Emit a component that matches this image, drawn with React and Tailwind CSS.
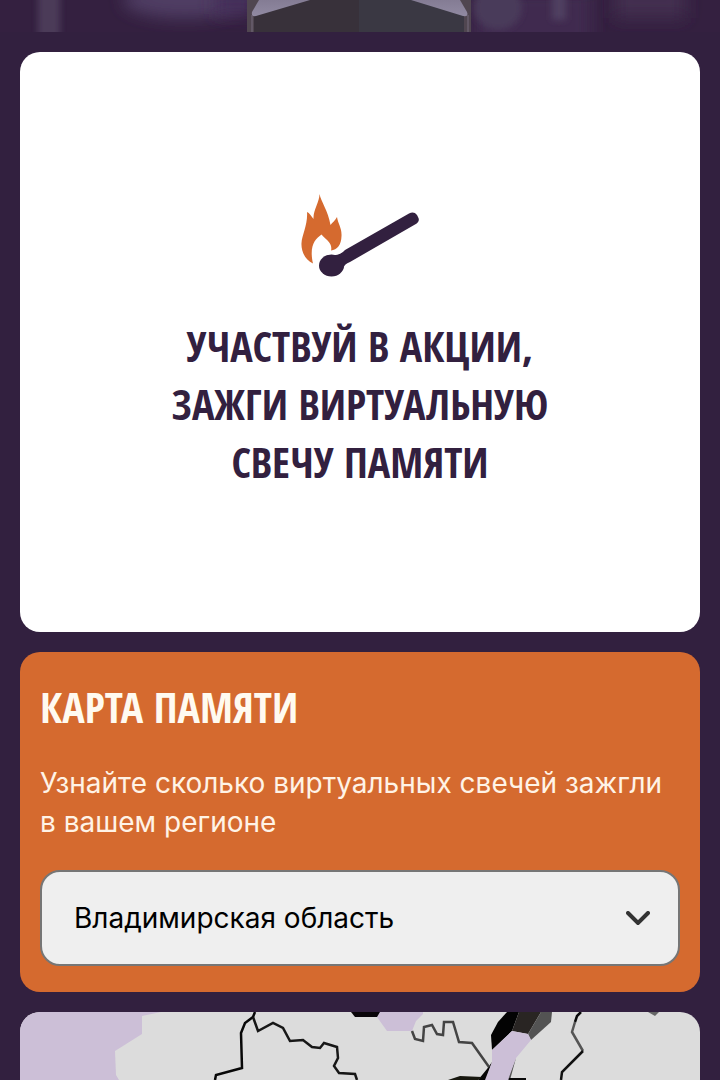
const regions = ["Владимирская область", "Московская область", "Рязанская область", "Ярославская область"];

function HeroPhoto() {
  return (
    <svg viewBox="0 0 720 32" className="block w-full" aria-hidden="true">
      <defs>
        <filter id="soft" x="-50%" y="-50%" width="200%" height="200%">
          <feGaussianBlur stdDeviation="8" />
        </filter>
        <filter id="slight" x="-50%" y="-50%" width="200%" height="200%">
          <feGaussianBlur stdDeviation="3" />
        </filter>
        <linearGradient id="ledge" x1="0" y1="0" x2="0" y2="1">
          <stop offset="0" stopColor="#847c94" />
          <stop offset="1" stopColor="#918aa2" />
        </linearGradient>
      </defs>
      <rect width="720" height="32" fill="#342040" />
      <rect x="38" y="-20" width="22" height="70" fill="#4b3a58" filter="url(#slight)" />
      <ellipse cx="185" cy="0" rx="62" ry="18" fill="#503c64" filter="url(#soft)" />
      <rect x="215" y="-20" width="40" height="34" fill="#452f5a" filter="url(#soft)" />
      <rect x="472" y="-10" width="120" height="60" fill="#3f2b50" filter="url(#soft)" />
      <ellipse cx="498" cy="8" rx="24" ry="22" fill="#4a3a5a" filter="url(#slight)" />
      <rect x="552" y="-20" width="14" height="40" fill="#4f3f60" filter="url(#slight)" />
      <rect x="615" y="-20" width="70" height="38" fill="#422f50" filter="url(#soft)" />
      <path d="M247 0H471V32H247Z" fill="#504650" />
      <path d="M254 14L300 0H359V32H254Z" fill="#38313a" />
      <path d="M359 0H420L464 14V32H359Z" fill="#3a3843" />
      <path d="M252 15V32M468 15V32" stroke="#625866" strokeWidth="2" />
      <path d="M259 0L252 12Q251 17 256 16L310 0Z" fill="url(#ledge)" />
      <path d="M460 0L467 12Q469 17 463 16L411 0Z" fill="url(#ledge)" />
    </svg>
  );
}

function MatchIcon() {
  return (
    <svg viewBox="0 0 120 84" className="h-[84px] w-[120px]" aria-hidden="true">
      <path
        d="M19.500 1C21 9 28 17 30.500 32C32 30 35.500 27 37 24C38 31 42 35 41.500 43C41.300 52 37 57 31 57.500C33 50 25 46 21.500 41.500C15 46 9 53 13 70.500C5 67 1 58 1.500 50C2 42 8 31 7 19C9.500 20 11 23 13.500 26C13 17 19.500 9 19.500 1Z"
        fill="#d56a2f"
      />
      <path d="M32 62Q40 63 45 57L109 20.500Q114 18 117 22L118.500 25Q120 29 115 31.500L50 69Q44 71 43 76Z" fill="#32203f" />
      <ellipse cx="31.500" cy="72.500" rx="12.500" ry="11" fill="#32203f" />
    </svg>
  );
}

function RegionMap() {
  return (
    <svg viewBox="0 0 680 68" className="block w-full" role="img" aria-label="Карта регионов">
      <rect width="680" height="68" fill="#dcdcdc" />
      <g fill="#ccbfd7">
        <path d="M0 0H141L122 4V22L95 39L96 63L99 68H0Z" />
        <path d="M359 0L357 5L367 19H392L396 9L403 2V0Z" />
      </g>
      <path d="M331 0L335 5H357L360 0Z" fill="#090509" />
      <path d="M487 0H499L492 19L472 38L471 23L478 10Z" fill="#030303" />
      <path d="M499 0H521L508 22L492 19Z" fill="#292523" />
      <path d="M521 0H532L531 10L511 28L508 22Z" fill="#535353" />
      <path d="M467 57L458 68H466L472 50Z" fill="#050505" />
      <path d="M496 46L490 68H487Z" fill="#555" />
      <path d="M489 66H506V68H489Z" fill="#080808" />
      <path d="M492 19L508 22L511 28L496 46L488 68H465L472 50V38Z" fill="#ccbfd7" />
      <path d="M628 0L635 4L639 0Z" fill="#666" />
      <path d="M428 68L440 64L462 65L458 68Z" fill="#17170f" />
      <g fill="none" strokeWidth="2.500">
        <path d="M235 0L233 5L225 11L221 21L222 56L196 63L195 68" stroke="#080808" />
        <path d="M233 5L238 19L253 11L263 16L270 29L283 28L292 35L300 36L304 31L317 35L318 46L314 54L319 61L335 62L337 68" stroke="#171717" />
        <path d="M392 19L395 27L403 29L404 15L412 13L417 22L423 23L424 10L433 10L439 30L452 31L469 55" stroke="#444" />
        <path d="M561 0L557 4L555 10" stroke="#080808" />
        <path d="M555 10L552 20L563 39" stroke="#555" />
        <path d="M563 39L542 60L541 68" stroke="#111" />
      </g>
    </svg>
  );
}

const heading =
  "font-['Open_Sans_Condensed','Roboto_Condensed',sans-serif] text-[42px] leading-[58px] font-semibold uppercase";

export default function App() {
  return (
    <main className="bg-[#32203f] font-['Inter',sans-serif]">
      <HeroPhoto />
      <div className="flex flex-col gap-5 px-5 pt-5">
        <a
          href="#candle"
          className="flex min-h-[580px] flex-col items-center justify-center gap-10 rounded-[20px] bg-white px-5 text-[#32203f]"
        >
          <MatchIcon />
          <h2 className={`${heading} text-center`}>
            Участвуй в акции,
            <br />
            зажги виртуальную
            <br />
            свечу памяти
          </h2>
        </a>

        <section className="rounded-[20px] bg-[#d56a2f] px-5 pt-[26px] pb-[26px] text-[#fff3e6]">
          <h2 className={`${heading} text-[#fffaf0]`}>Карта памяти</h2>
          <label htmlFor="region" className="mt-7 block text-[28px] leading-[39px]">
            Узнайте сколько виртуальных свечей зажгли
            <br />в вашем регионе
          </label>
          <div className="relative mt-7">
            <select
              id="region"
              defaultValue={regions[0]}
              className="block h-24 w-full appearance-none rounded-[20px] border-2 border-[#767676] bg-[#efefef] pr-20 pl-8 text-[28px] text-black"
            >
              {regions.map((r) => (
                <option key={r}>{r}</option>
              ))}
            </select>
            <svg
              viewBox="0 0 24 14"
              className="pointer-events-none absolute inset-y-0 right-[30px] my-auto h-[14px] w-6"
              fill="none"
              stroke="#333"
              strokeWidth="4"
              strokeLinecap="round"
              aria-hidden="true"
            >
              <path d="M2 2L12 12L22 2" />
            </svg>
          </div>
        </section>

        <section className="overflow-hidden rounded-t-[20px]">
          <RegionMap />
        </section>
      </div>
    </main>
  );
}
